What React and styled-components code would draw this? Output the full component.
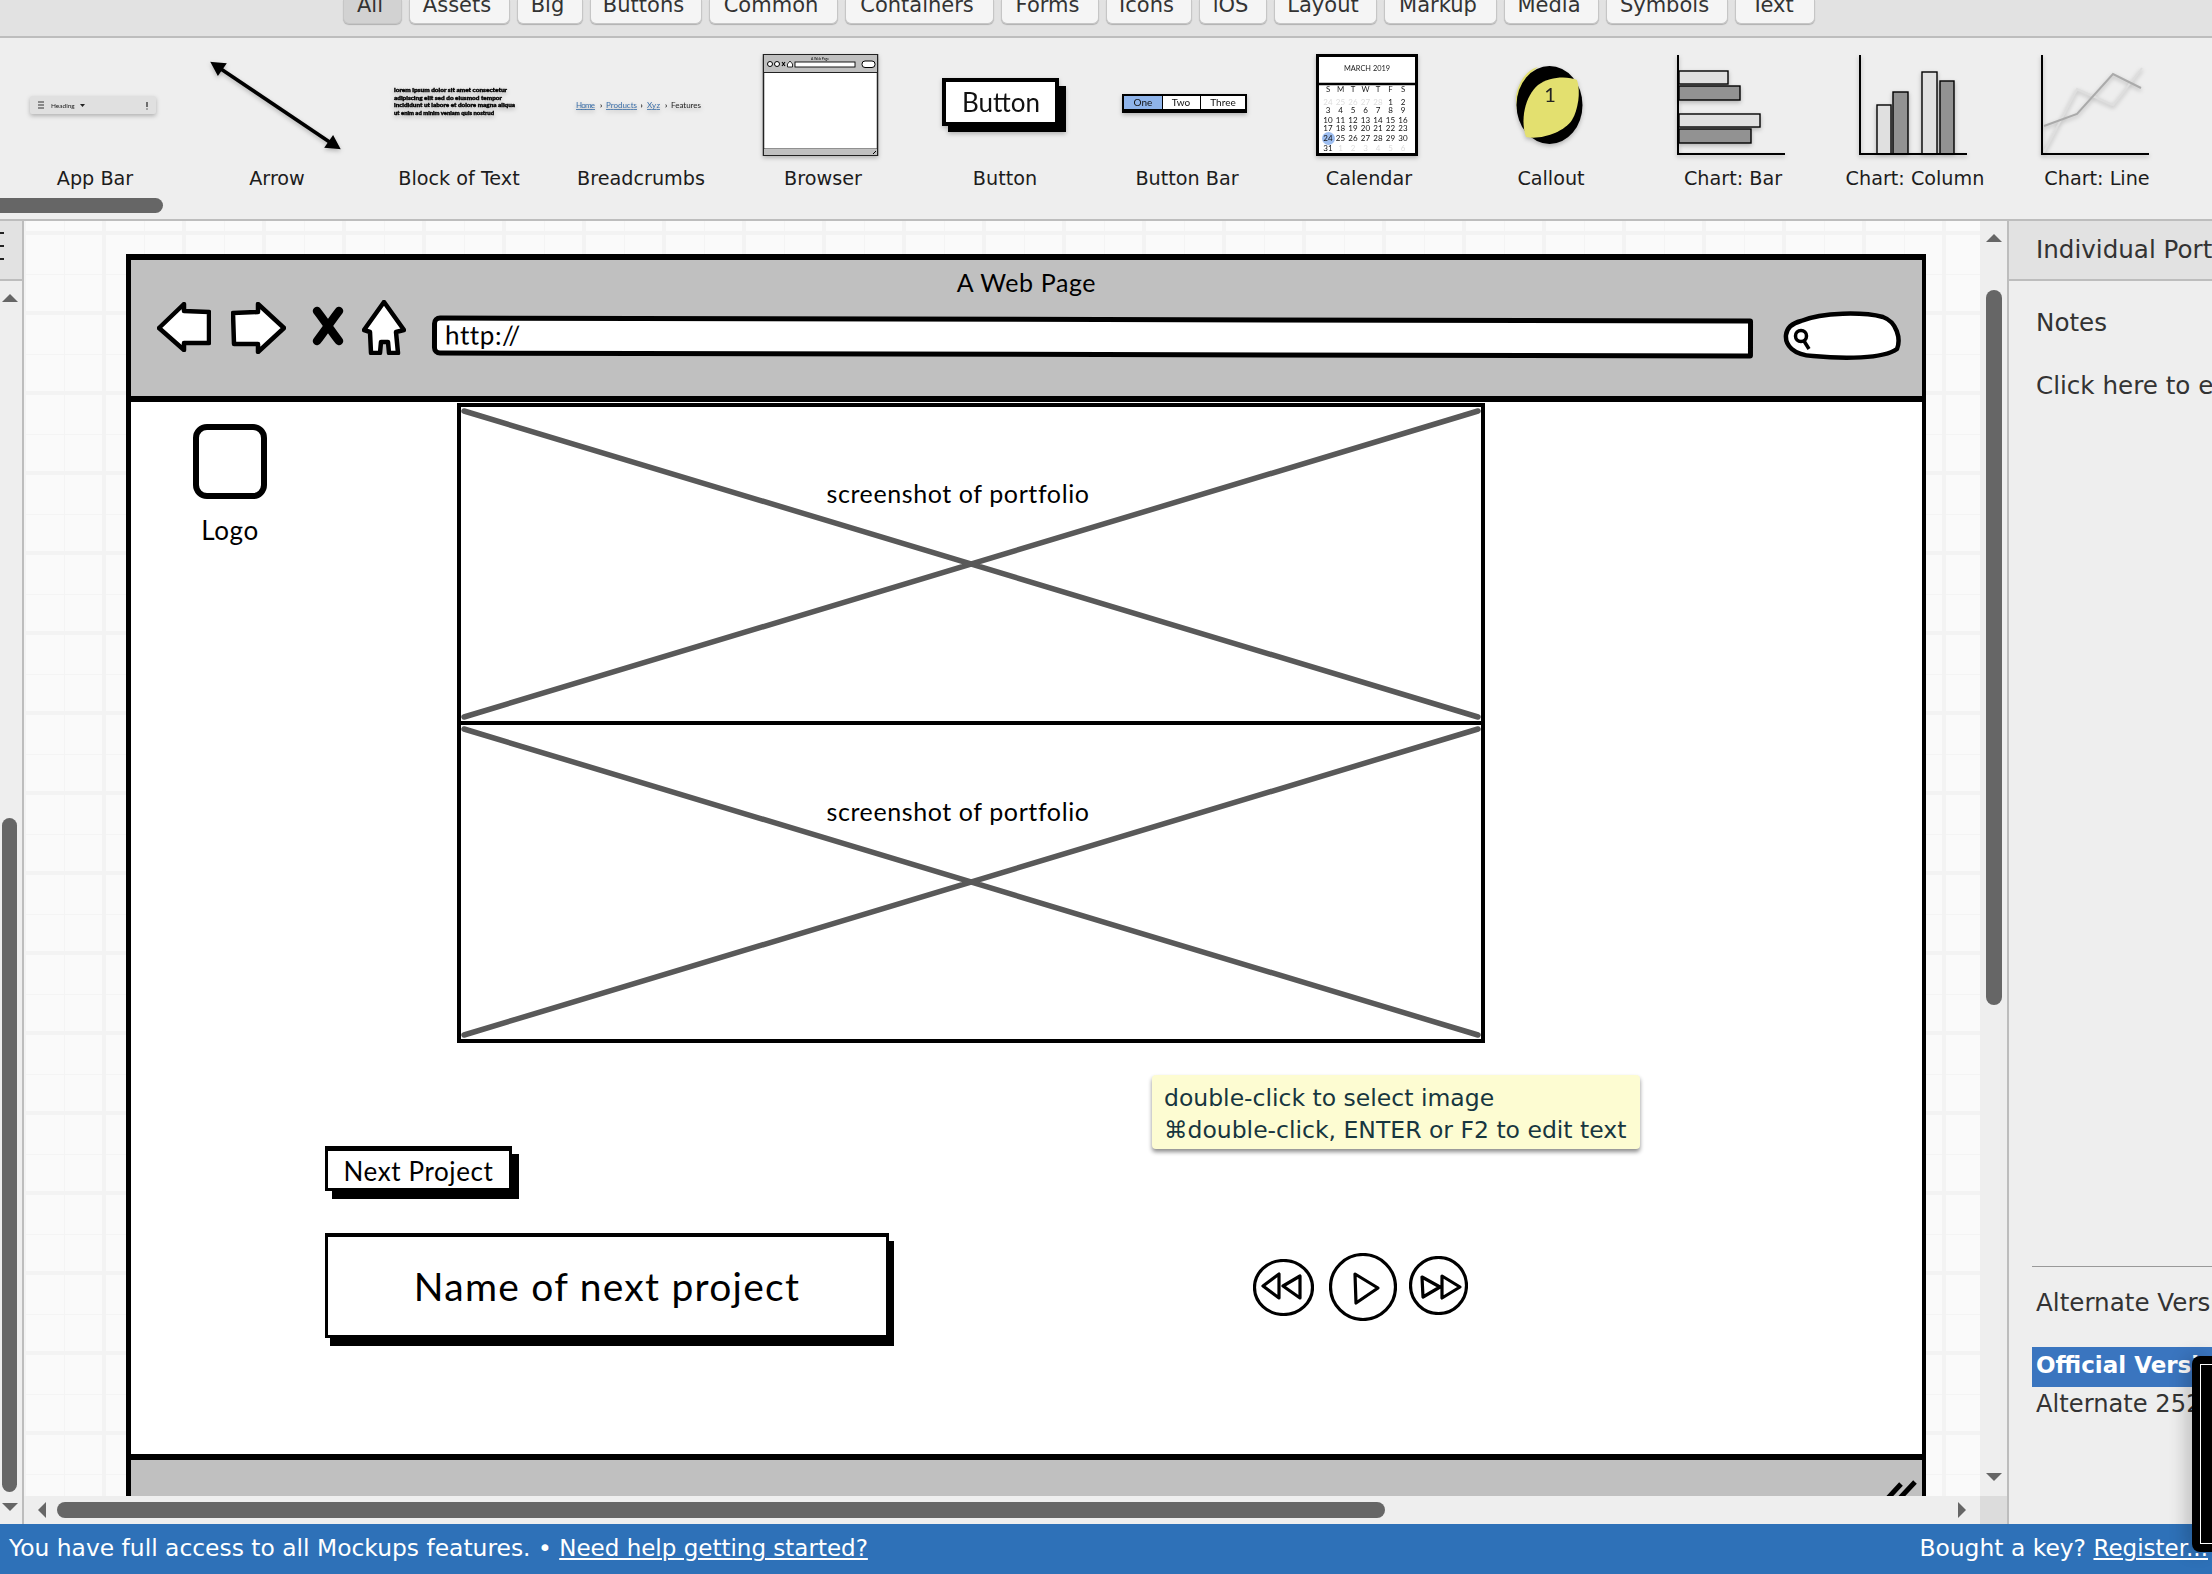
import React from 'react';
import styled, { createGlobalStyle } from 'styled-components';

const UI_FONT = '"DejaVu Sans", Verdana, sans-serif';
const SKETCH_FONT = 'Lato, "Open Sans", sans-serif';

const GlobalStyle = createGlobalStyle`
  * { box-sizing: border-box; }
  html, body { margin: 0; padding: 0; background: #eee; }
  body { font-family: ${UI_FONT}; color: #222; overflow: hidden; }
`;

const Page = styled.div`
  display: flex;
  flex-direction: column;
  width: 2212px;
  height: 1574px;
  overflow: hidden;
`;

/* library filter tabs */
const TopBar = styled.div`
  display: flex;
  flex: none;
  gap: 7px;
  height: 38px;
  padding-left: 343px;
  background: #e2e2e2;
  border-bottom: 2px solid #bdbdbd;
  overflow: hidden;
`;

const Tab = styled.div`
  flex: none;
  width: ${({ $w }) => $w}px;
  height: 24px;
  padding-right: 5px;
  font-size: 21px;
  line-height: 10px;
  text-align: center;
  color: #333;
  background: ${({ $active }) => ($active ? '#d2d2d2' : '#f5f5f5')};
  border: 1px solid #c6c6c6;
  border-top: 0;
  border-radius: 0 0 6px 6px;
  box-shadow: 0 1px 1px rgba(0, 0, 0, 0.22);
`;

/* component palette */
const Palette = styled.div`
  flex: none;
  height: 183px;
  background: #eee;
  border-bottom: 2px solid #bdbdbd;
`;

const PaletteRow = styled.div`
  display: grid;
  grid-template-columns: repeat(12, 182px);
  height: 160px;
  padding: 16px 0 0 4px;
`;

const PaletteItem = styled.div`
  display: flex;
  flex-direction: column;
  align-items: center;
`;

const Thumb = styled.svg`
  display: block;
  width: 182px;
  height: 102px;
  filter: drop-shadow(0 2px 2px rgba(0, 0, 0, 0.25));
`;

const PaletteLabel = styled.div`
  margin-top: 11px;
  font-size: 19.2px;
  line-height: 24px;
  color: #1c1c1c;
  white-space: nowrap;
`;

const PaletteScroll = styled.div`
  width: 163px;
  height: 15px;
  background: #666;
  border-radius: 0 8px 8px 0;
`;

/* main area */
const Main = styled.div`
  display: flex;
  flex: 1;
  min-height: 0;
`;

const LeftRail = styled.div`
  display: flex;
  flex: none;
  flex-direction: column;
  width: 24px;
  background: #eee;
  border-right: 2px solid #bdbdbd;
`;

const LeftRailHead = styled.div`
  display: flex;
  flex: none;
  flex-direction: column;
  gap: 11px;
  height: 60px;
  padding-top: 11px;
  background: #e2e2e2;
  border-bottom: 2px solid #bdbdbd;
`;

const RailTick = styled.span`
  display: block;
  width: 4px;
  height: 2px;
  background: #222;
`;

const Triangle = styled.span`
  display: block;
  flex: none;
  width: 0;
  height: 0;
  ${({ $dir }) =>
    $dir === 'up' && 'border-left: 8px solid transparent; border-right: 8px solid transparent; border-bottom: 8px solid #666;'}
  ${({ $dir }) =>
    $dir === 'down' && 'border-left: 8px solid transparent; border-right: 8px solid transparent; border-top: 8px solid #666;'}
  ${({ $dir }) =>
    $dir === 'left' && 'border-top: 8px solid transparent; border-bottom: 8px solid transparent; border-right: 8px solid #666;'}
  ${({ $dir }) =>
    $dir === 'right' && 'border-top: 8px solid transparent; border-bottom: 8px solid transparent; border-left: 8px solid #666;'}
`;

const LeftTrack = styled.div`
  display: flex;
  flex-direction: column;
  padding: 13px 0 0 2px;
`;

const LeftThumb = styled.div`
  width: 15px;
  height: 674px;
  margin: 516px 0 11px;
  background: #666;
  border-radius: 8px;
`;

const Workspace = styled.div`
  display: flex;
  flex: 1;
  flex-direction: column;
  min-width: 0;
`;

const CanvasRow = styled.div`
  display: flex;
  flex: 1;
  min-height: 0;
`;

const Canvas = styled.div`
  position: relative;
  flex: 1;
  min-width: 0;
  padding: 33px 0 0 102px;
  overflow: hidden;
  background-color: #fafafa;
  background-image:
    linear-gradient(to right, #f3f3f3 4px, transparent 4px),
    linear-gradient(to bottom, #f3f3f3 4px, transparent 4px),
    linear-gradient(to right, #f4f4f4 1px, transparent 1px),
    linear-gradient(to bottom, #f4f4f4 1px, transparent 1px);
  background-size: 80px 80px;
  background-position: -2px 0, 0 10px, 40px 0, 0 53px;
`;

const VScroll = styled.div`
  display: flex;
  flex: none;
  flex-direction: column;
  width: 27px;
  padding: 13px 0 0 6px;
  background: #eee;
`;

const VThumb = styled.div`
  width: 16px;
  height: 715px;
  margin: 48px 0 468px;
  background: #666;
  border-radius: 8px;
`;

const HScroll = styled.div`
  display: flex;
  flex: none;
  align-items: center;
  height: 28px;
  padding-left: 14px;
  background: #eee;
`;

const HThumb = styled.div`
  width: 1328px;
  height: 16px;
  margin: 0 573px 0 11px;
  background: #666;
  border-radius: 8px;
`;

const ScrollCorner = styled.div`
  flex: none;
  width: 27px;
  height: 28px;
  margin-left: 14px;
  background: #dcdcdc;
`;

/* the wireframe on the canvas */
const BrowserMock = styled.div`
  display: flex;
  flex-direction: column;
  width: 1800px;
  height: 1300px;
  background: #fff;
  border: 6px solid #000;
  border-width: 6px 4px 6px 5px;
  font-family: ${SKETCH_FONT};
  letter-spacing: 0.6px;
  color: #000;
`;

const BrowserHeader = styled.div`
  flex: none;
  height: 142px;
  background: #c0c0c0;
  border-bottom: 6px solid #000;
`;

const BrowserTitle = styled.div`
  padding-top: 9px;
  font-size: 25px;
  line-height: 26px;
  text-align: center;
`;

const ToolRow = styled.div`
  display: flex;
  align-items: flex-start;
  margin-top: 5px;
  padding-left: 26px;
`;

const NavIcon = styled.svg`
  display: block;
  flex: none;
  margin: ${({ $mt }) => $mt || 0}px 0 0 ${({ $ml }) => $ml || 0}px;
`;

const UrlField = styled.div`
  flex: none;
  width: 1321px;
  height: 40px;
  margin: 17px 0 0 26px;
  padding-left: 8px;
  font-size: 26px;
  line-height: 29px;
  background: #fff;
  border: 5px solid #000;
  border-radius: 8px 3px 3px 8px;
  transform: rotate(0.13deg);
`;

const BrowserBody = styled.div`
  position: relative;
  flex: none;
  height: 1052px;
`;

const BrowserFooter = styled.div`
  position: relative;
  flex: 1;
  background: #c0c0c0;
  border-top: 6px solid #000;
`;

const ResizeGrip = styled.svg`
  position: absolute;
  top: 14px;
  right: 3px;
`;

const ImageStack = styled.div`
  position: absolute;
  top: 1px;
  left: 326px;
  display: flex;
  flex-direction: column;
  width: 1028px;
`;

const ImagePlaceholder = styled.div`
  position: relative;
  height: 322px;
  margin-top: ${({ $first }) => ($first ? 0 : -4)}px;
  border: 4px solid #000;
  background: #fff;
`;

const CrossLines = styled.svg`
  display: block;
  width: 100%;
  height: 100%;
`;

const ImageCaption = styled.div`
  position: absolute;
  top: 71px;
  left: 0;
  width: 100%;
  font-size: 25px;
  line-height: 30px;
  text-align: center;
  transform: translateX(-13px);
`;

const LogoMark = styled.div`
  position: absolute;
  top: 22px;
  left: 62px;
  width: 74px;
  height: 75px;
  background: #fff;
  border: 6px solid #000;
  border-radius: 14px;
`;

const LogoLabel = styled.div`
  position: absolute;
  top: 113px;
  left: 62px;
  width: 74px;
  font-size: 26px;
  line-height: 30px;
  text-align: center;
`;

const NextButton = styled.div`
  position: absolute;
  top: 744px;
  left: 194px;
  width: 187px;
  height: 45px;
  font-size: 26px;
  line-height: 40px;
  text-align: center;
  background: #fff;
  border: solid #000;
  border-width: 5px 3px 3px 3px;
  box-shadow: 7px 8px 0 #000;
`;

const NameBox = styled.div`
  position: absolute;
  top: 831px;
  left: 194px;
  width: 564px;
  height: 105px;
  font-size: 39px;
  line-height: 98px;
  letter-spacing: 1.25px;
  text-align: center;
  background: #fff;
  border: solid #000;
  border-width: 4px 3px 3px 3px;
  box-shadow: 5px 8px 0 #000;
`;

const MediaControls = styled.div`
  position: absolute;
  top: 851px;
  left: 1122px;
  display: flex;
  align-items: flex-start;
`;

const MediaIcon = styled.svg`
  display: block;
  flex: none;
  margin: ${({ $mt }) => $mt || 0}px 0 0 ${({ $ml }) => $ml || 0}px;
`;

const EditHint = styled.div`
  position: absolute;
  top: 673px;
  left: 1021px;
  z-index: 1;
  width: 488px;
  height: 74px;
  padding: 7px 0 0 12px;
  font-family: ${UI_FONT};
  font-size: 23.5px;
  line-height: 32px;
  letter-spacing: 0;
  color: #17363f;
  white-space: nowrap;
  background: #fdfcd2;
  border-radius: 4px;
  box-shadow: 0 3px 4px rgba(0, 0, 0, 0.45);
`;

/* properties panel */
const RightRail = styled.div`
  display: flex;
  flex: none;
  flex-direction: column;
  width: 205px;
  overflow: hidden;
  font-size: 24.6px;
  color: #333;
  white-space: nowrap;
  background: #eee;
  border-left: 2px solid #bdbdbd;
`;

const PanelHead = styled.div`
  flex: none;
  height: 60px;
  padding-left: 27px;
  line-height: 58px;
  background: #e2e2e2;
  border-bottom: 2px solid #bdbdbd;
`;

const PanelText = styled.div`
  flex: none;
  margin-top: ${({ $mt }) => $mt}px;
  padding-left: 27px;
  line-height: 30px;
`;

const PanelSpacer = styled.div`
  flex: 1;
`;

const PanelRule = styled.div`
  flex: none;
  height: 1px;
  margin-left: 23px;
  background: #999;
`;

const VersionList = styled.div`
  flex: none;
  margin: 29px 0 104px 23px;
`;

const VersionRow = styled.div`
  height: ${({ $selected }) => ($selected ? 40 : 33)}px;
  padding-left: 4px;
  font-size: ${({ $selected }) => ($selected ? 23 : 24.2)}px;
  font-weight: ${({ $selected }) => ($selected ? 700 : 400)};
  line-height: ${({ $selected }) => ($selected ? 37 : 34)}px;
  color: ${({ $selected }) => ($selected ? '#fff' : '#333')};
  background: ${({ $selected }) => ($selected ? '#3a75bf' : 'transparent')};
`;

/* status bar */
const StatusBar = styled.div`
  position: relative;
  z-index: 2;
  display: flex;
  flex: none;
  justify-content: space-between;
  height: 50px;
  padding: 0 4px 0 9px;
  font-size: 23.4px;
  line-height: 48px;
  color: #fff;
  white-space: nowrap;
  background: #2e71b8;
`;

const StatusText = styled.div`
  position: relative;
  z-index: 1;
`;

const StatusLink = styled.span`
  font-size: 23px;
  text-decoration: underline;
`;

const DarkWindow = styled.div`
  position: absolute;
  right: 0;
  bottom: 22px;
  width: 20px;
  height: 196px;
  background: #000;
  border-radius: 8px 0 0 8px;
  box-shadow: -6px 0 18px rgba(0, 0, 0, 0.2);
`;

const DarkWindowEdge = styled.div`
  position: absolute;
  top: 8px;
  left: 8px;
  right: -4px;
  bottom: 8px;
  border: 1px solid #fff;
`;

const TABS = [
  ['All', 59], ['Assets', 101], ['Big', 66], ['Buttons', 112], ['Common', 129],
  ['Containers', 149], ['Forms', 98], ['Icons', 86], ['iOS', 68], ['Layout', 103],
  ['Markup', 113], ['Media', 95], ['Symbols', 122], ['Text', 80],
];

const CAL_ROWS = [
  [['24', 1], ['25', 1], ['26', 1], ['27', 1], ['28', 1], ['1'], ['2']],
  [['3'], ['4'], ['5'], ['6'], ['7'], ['8'], ['9']],
  [['10'], ['11'], ['12'], ['13'], ['14'], ['15'], ['16']],
  [['17'], ['18'], ['19'], ['20'], ['21'], ['22'], ['23']],
  [['24'], ['25'], ['26'], ['27'], ['28'], ['29'], ['30']],
  [['31'], ['1', 1], ['2', 1], ['3', 1], ['4', 1], ['5', 1], ['6', 1]],
];
const CAL_BASELINES = [51, 59, 69, 77, 87, 97];

const thumbText = { fontFamily: SKETCH_FONT };

const AppBarThumb = () => (
  <g>
    <rect x="26" y="42" width="126" height="18" rx="2" fill="#e0e0e0" />
    <path d="M34 48h6M34 51h6M34 54h6" stroke="#333" strokeWidth="1" />
    <text x="47" y="53.5" fontSize="6.5" fill="#222" style={thumbText}>Heading</text>
    <path d="M76 50h5l-2.5 3z" fill="#222" />
    <path d="M143 48v5M143 54.5v1" stroke="#222" strokeWidth="1.2" />
  </g>
);

const ArrowThumb = () => (
  <g>
    <path d="M32 13L148 91" stroke="#000" strokeWidth="3.6" />
    <path d="M26 9l13 1-7 10z" fill="#000" stroke="#000" strokeWidth="2" />
    <path d="M153 94l-13-1 7-10z" fill="#000" stroke="#000" strokeWidth="2" />
  </g>
);

const BlockThumb = () => (
  <g fontSize="5" fontWeight="900" fill="#000" stroke="#000" strokeWidth="0.35" style={thumbText}>
    <text x="26" y="37.5" textLength="113" lengthAdjust="spacingAndGlyphs">lorem ipsum dolor sit amet consectetur</text>
    <text x="26" y="45.5" textLength="108" lengthAdjust="spacingAndGlyphs">adipiscing elit sed do eiusmod tempor</text>
    <text x="26" y="52.5" textLength="121" lengthAdjust="spacingAndGlyphs">incididunt ut labore et dolore magna aliqua</text>
    <text x="26" y="60.5" textLength="100" lengthAdjust="spacingAndGlyphs">ut enim ad minim veniam quis nostrud</text>
  </g>
);

const BreadcrumbThumb = () => (
  <g fontSize="8" style={thumbText}>
    <text x="26" y="54" fill="#3a6ea8" textDecoration="underline" textLength="19">Home</text>
    <text x="50" y="54" fill="#111" fontWeight="700">›</text>
    <text x="56" y="54" fill="#3a6ea8" textDecoration="underline" textLength="31">Products</text>
    <text x="90.5" y="54" fill="#111" fontWeight="700">›</text>
    <text x="97" y="54" fill="#3a6ea8" textDecoration="underline" textLength="13">Xyz</text>
    <text x="115" y="54" fill="#111" fontWeight="700">›</text>
    <text x="121" y="54" fill="#222" textLength="30">Features</text>
  </g>
);

const BrowserThumb = () => (
  <g>
    <rect x="31.5" y="0.5" width="114" height="101" fill="#fff" stroke="#222" strokeWidth="1.5" />
    <rect x="32" y="1" width="113" height="17" fill="#c0c0c0" />
    <path d="M32 18.5h113M32 95h113" stroke="#222" strokeWidth="1.2" />
    <rect x="32" y="95" width="113" height="6" fill="#c0c0c0" />
    <text x="88" y="5.5" fontSize="3.4" textAnchor="middle" style={thumbText}>A Web Page</text>
    <circle cx="38" cy="10" r="2.5" fill="#fff" stroke="#000" />
    <circle cx="45" cy="10" r="2.5" fill="#fff" stroke="#000" />
    <path d="M50 8l3 4M53 8l-3 4" stroke="#000" strokeWidth="1.1" />
    <path d="M58 7l2.5 3v3h-5v-3z" fill="#fff" stroke="#000" strokeWidth="0.8" />
    <rect x="63" y="8" width="60" height="5" fill="#fff" stroke="#000" strokeWidth="0.9" />
    <rect x="130" y="7" width="13" height="6.5" rx="3" fill="#fff" stroke="#000" />
    <path d="M141 100l3-3" stroke="#000" />
  </g>
);

const ButtonThumb = () => (
  <g>
    <rect x="34" y="32" width="118" height="46" fill="#000" />
    <rect x="30" y="26" width="113" height="44" fill="#fff" stroke="#000" strokeWidth="4" />
    <text x="87" y="58" fontSize="26" textAnchor="middle" fill="#111" style={thumbText}>Button</text>
  </g>
);

const ButtonBarThumb = () => (
  <g>
    <rect x="26" y="40" width="125" height="19" fill="#000" />
    <rect x="28" y="42" width="38" height="13" fill="#8fb4ea" />
    <rect x="67" y="42" width="37" height="13" fill="#fff" />
    <rect x="105" y="42" width="44" height="13" fill="#fff" />
    <g fontSize="10" textAnchor="middle" fill="#111" style={thumbText}>
      <text x="47" y="52">One</text>
      <text x="85" y="52">Two</text>
      <text x="127" y="52">Three</text>
    </g>
  </g>
);

const CalendarThumb = () => (
  <g style={thumbText} textAnchor="middle">
    <rect x="39.5" y="1.5" width="99" height="99" fill="#fff" stroke="#000" strokeWidth="3" />
    <path d="M40 30h98" stroke="#000" strokeWidth="2.5" />
    <text x="89" y="16.5" fontSize="7.4" fill="#222">MARCH 2019</text>
    <circle cx="50.5" cy="84.5" r="6.5" fill="#9cbdf0" />
    {['S', 'M', 'T', 'W', 'T', 'F', 'S'].map((d, i) => (
      <text key={i} x={50 + 12.5 * i} y="38" fontSize="7.8" fill="#222">{d}</text>
    ))}
    {CAL_ROWS.map((row, r) =>
      row.map(([d, faded], i) => (
        <text key={`${r}-${i}`} x={50 + 12.5 * i} y={CAL_BASELINES[r]} fontSize="8" fill={faded ? '#ddd' : '#111'}>{d}</text>
      ))
    )}
  </g>
);

const CalloutThumb = () => (
  <g>
    <path d="M56 44C57 30 66 16 78 13C66 22 58 34 57 58Z" fill="#e3e06f" />
    <ellipse cx="89.5" cy="51" rx="33" ry="39" fill="#000" />
    <path d="M66 83C60 66 65 42 78 31C90 22 108 22 117 26C121 38 118 56 112 66C104 78 82 86 66 83Z" fill="#e3e06f" />
    <text x="90" y="48" fontSize="20" textAnchor="middle" fill="#222" style={thumbText}>1</text>
  </g>
);

const Axes = () => <path d="M36 1V100H143" fill="none" stroke="#000" strokeWidth="2" />;

const ChartBarThumb = () => (
  <g stroke="#000" strokeWidth="1.4">
    <rect x="37" y="17" width="49" height="13" fill="#e0e0e0" />
    <rect x="37" y="32" width="61" height="14" fill="#929292" />
    <rect x="37" y="60" width="81" height="13" fill="#e0e0e0" />
    <rect x="37" y="75" width="72" height="14" fill="#929292" />
    <Axes />
  </g>
);

const ChartColumnThumb = () => (
  <g stroke="#000" strokeWidth="1.4">
    <rect x="53" y="51" width="14" height="49" fill="#e0e0e0" />
    <rect x="69" y="38" width="15" height="62" fill="#929292" />
    <rect x="98" y="18" width="15" height="82" fill="#e0e0e0" />
    <rect x="116" y="27" width="14" height="73" fill="#929292" />
    <Axes />
  </g>
);

const ChartLineThumb = () => (
  <g fill="none">
    <path d="M38 98L71 35L107 51L136 14" stroke="#dedede" strokeWidth="2" />
    <path d="M38 72L71 60L107 20L135 34" stroke="#aaa" strokeWidth="2" />
    <Axes />
  </g>
);

const PALETTE = [
  ['App Bar', AppBarThumb],
  ['Arrow', ArrowThumb],
  ['Block of Text', BlockThumb],
  ['Breadcrumbs', BreadcrumbThumb],
  ['Browser', BrowserThumb],
  ['Button', ButtonThumb],
  ['Button Bar', ButtonBarThumb],
  ['Calendar', CalendarThumb],
  ['Callout', CalloutThumb],
  ['Chart: Bar', ChartBarThumb],
  ['Chart: Column', ChartColumnThumb],
  ['Chart: Line', ChartLineThumb],
];

const Sketch = { fill: '#fff', stroke: '#000', strokeWidth: 4.5, strokeLinejoin: 'round' };
const MediaStroke = { fill: 'none', stroke: '#000', strokeWidth: 3.2, strokeLinejoin: 'round' };

const Placeholder = ({ first }) => (
  <ImagePlaceholder $first={first}>
    <CrossLines viewBox="0 0 1020 314" preserveAspectRatio="none">
      <path d="M3 4L1017 310M3 310L1017 4" stroke="#595959" strokeWidth="5.5" strokeLinecap="round" />
    </CrossLines>
    <ImageCaption>screenshot of portfolio</ImageCaption>
  </ImagePlaceholder>
);

const App = () => (
  <Page>
    <GlobalStyle />
    <TopBar>
      {TABS.map(([name, w]) => (
        <Tab key={name} $w={w} $active={name === 'All'}>{name}</Tab>
      ))}
    </TopBar>

    <Palette>
      <PaletteRow>
        {PALETTE.map(([label, Drawing]) => (
          <PaletteItem key={label}>
            <Thumb viewBox="0 0 182 102"><Drawing /></Thumb>
            <PaletteLabel>{label}</PaletteLabel>
          </PaletteItem>
        ))}
      </PaletteRow>
      <PaletteScroll />
    </Palette>

    <Main>
      <LeftRail>
        <LeftRailHead>
          <RailTick />
          <RailTick />
          <RailTick />
        </LeftRailHead>
        <LeftTrack>
          <Triangle $dir="up" />
          <LeftThumb />
          <Triangle $dir="down" />
        </LeftTrack>
      </LeftRail>

      <Workspace>
        <CanvasRow>
          <Canvas>
            <BrowserMock>
              <BrowserHeader>
                <BrowserTitle>A Web Page</BrowserTitle>
                <ToolRow>
                  <NavIcon width="54" height="50" viewBox="0 0 54 50" $mt="2">
                    <path d="M2 26L27 2V9L52 10V41H27V48Z" {...Sketch} />
                  </NavIcon>
                  <NavIcon width="55" height="52" viewBox="0 0 55 52" $mt="2" $ml="20">
                    <path d="M2 11L27 10V2L53 26L27 50V42H3Z" {...Sketch} />
                  </NavIcon>
                  <NavIcon width="32" height="40" viewBox="0 0 32 40" $mt="6" $ml="26">
                    <path d="M5 5C12 14 20 26 27 35M27 5C20 14 12 26 5 35" fill="none" stroke="#000" strokeWidth="8.5" strokeLinecap="round" />
                  </NavIcon>
                  <NavIcon width="44" height="55" viewBox="0 0 44 55" $ml="18">
                    <path d="M22 2L42 30L34 32L36 53H27L26 42H19L18 53H9L8 32L2 30Z" {...Sketch} />
                  </NavIcon>
                  <UrlField>http://</UrlField>
                  <NavIcon width="119" height="50" viewBox="0 0 119 50" $mt="11" $ml="30">
                    <path d="M18 10C40 1 80 1 100 6C114 11 118 28 114 38C100 48 60 48 30 45C10 44 2 34 3 24C4 16 10 12 18 10Z" {...Sketch} />
                    <circle cx="18" cy="25" r="5.5" fill="#fff" stroke="#000" strokeWidth="3.5" />
                    <path d="M21 30L26 38" stroke="#000" strokeWidth="3.5" />
                  </NavIcon>
                </ToolRow>
              </BrowserHeader>

              <BrowserBody>
                <LogoMark />
                <LogoLabel>Logo</LogoLabel>
                <ImageStack>
                  <Placeholder first />
                  <Placeholder />
                </ImageStack>
                <EditHint>
                  double-click to select image
                  <br />
                  ⌘double-click, ENTER or F2 to edit text
                </EditHint>
                <NextButton>Next Project</NextButton>
                <NameBox>Name of next project</NameBox>
                <MediaControls>
                  <MediaIcon width="61" height="57" viewBox="0 0 61 57" $mt="6">
                    <ellipse cx="30.5" cy="28.5" rx="29" ry="27" {...MediaStroke} />
                    <path d="M10 27L26 15V39ZM30 27L47 17V39Z" {...MediaStroke} />
                  </MediaIcon>
                  <MediaIcon width="68" height="68" viewBox="0 0 68 68" $ml="15">
                    <ellipse cx="34" cy="34" rx="32.5" ry="32.5" {...MediaStroke} />
                    <path d="M26 21L49 35L27 50Z" {...MediaStroke} />
                  </MediaIcon>
                  <MediaIcon width="59" height="59" viewBox="0 0 59 59" $mt="3" $ml="12">
                    <ellipse cx="29.5" cy="29.5" rx="28" ry="28" {...MediaStroke} />
                    <path d="M13 21L31 31L14 41ZM33 20L51 31L33 42Z" {...MediaStroke} />
                  </MediaIcon>
                </MediaControls>
              </BrowserBody>

              <BrowserFooter>
                <ResizeGrip width="34" height="24" viewBox="0 0 34 24">
                  <path d="M3 24L16 10M15 24L30 8" stroke="#000" strokeWidth="5" />
                </ResizeGrip>
              </BrowserFooter>
            </BrowserMock>
          </Canvas>
          <VScroll>
            <Triangle $dir="up" />
            <VThumb />
            <Triangle $dir="down" />
          </VScroll>
        </CanvasRow>
        <HScroll>
          <Triangle $dir="left" />
          <HThumb />
          <Triangle $dir="right" />
          <ScrollCorner />
        </HScroll>
      </Workspace>

      <RightRail>
        <PanelHead>Individual Portfolio</PanelHead>
        <PanelText $mt="27">Notes</PanelText>
        <PanelText $mt="33">Click here to enter notes</PanelText>
        <PanelSpacer />
        <PanelRule />
        <PanelText $mt="21">Alternate Versions</PanelText>
        <VersionList>
          <VersionRow $selected>Official Version</VersionRow>
          <VersionRow>Alternate 2520</VersionRow>
        </VersionList>
      </RightRail>
    </Main>

    <StatusBar>
      <StatusText>
        You have full access to all Mockups features. • <StatusLink>Need help getting started?</StatusLink>
      </StatusText>
      <DarkWindow>
        <DarkWindowEdge />
      </DarkWindow>
      <StatusText>
        Bought a key? <StatusLink>Register...</StatusLink>
      </StatusText>
    </StatusBar>
  </Page>
);

export default App;
